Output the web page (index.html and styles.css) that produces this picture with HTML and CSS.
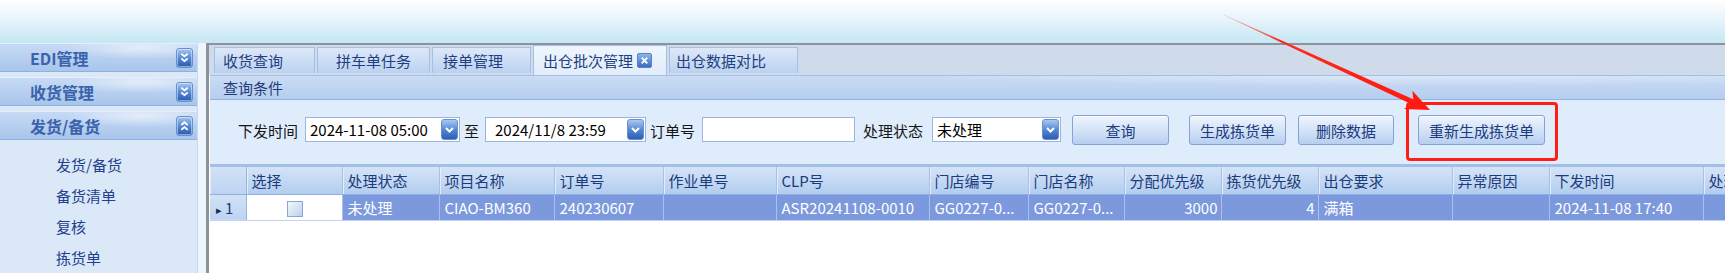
FILE: index.html
```html
<!DOCTYPE html>
<html lang="zh-CN">
<head>
  <meta charset="UTF-8" />
  <meta name="viewport" content="width=device-width, initial-scale=1.0"/>
  <title>出仓批次管理</title>
  <link rel="stylesheet" href="styles.css">
</head>
<body>

  <!-- Top banner -->
  <div class="banner"></div>

  <div class="main">

    <!-- Left menu -->
    <div class="sidebar">
      <div class="menu-head">
        <span>EDI管理</span>
        <span class="hicon"><svg viewBox="0 0 14 17"><path d="M4 4.5l3 2.5 3-2.5M4 9l3 2.5 3-2.5"/></svg></span>
      </div>
      <div class="menu-head">
        <span>收货管理</span>
        <span class="hicon"><svg viewBox="0 0 14 17"><path d="M4 4.5l3 2.5 3-2.5M4 9l3 2.5 3-2.5"/></svg></span>
      </div>
      <div class="menu-head">
        <span>发货/备货</span>
        <span class="hicon"><svg viewBox="0 0 14 17"><path d="M4 7.5l3-2.5 3 2.5M4 12l3-2.5 3 2.5"/></svg></span>
      </div>
      <ul class="menu-items">
        <li>发货/备货</li>
        <li>备货清单</li>
        <li>复核</li>
        <li>拣货单</li>
      </ul>
    </div>

    <div class="spacer"></div>

    <!-- Work area -->
    <div class="panel">
      <div class="tabs">
        <div class="tab t1">收货查询</div>
        <div class="tab t2">拼车单任务</div>
        <div class="tab t3">接单管理</div>
        <div class="tab t4 active">出仓批次管理
          <span class="tclose"><svg viewBox="0 0 14 14"><path d="M4 4l6 6M10 4l-6 6"/></svg></span>
        </div>
        <div class="tab t5">出仓数据对比</div>
      </div>

      <div class="querybar">查询条件</div>

      <div class="filters">
        <span class="lbl">下发时间</span>
        <div class="field date1">
          <span>2024-11-08 05:00</span>
          <span class="dd"><svg viewBox="0 0 15 19"><path d="M4 8l3.5 3.5L11 8"/></svg></span>
        </div>
        <span class="lbl to">至</span>
        <div class="field date2">
          <span>2024/11/8 23:59</span>
          <span class="dd"><svg viewBox="0 0 15 19"><path d="M4 8l3.5 3.5L11 8"/></svg></span>
        </div>
        <span class="lbl order">订单号</span>
        <div class="field orderno"></div>
        <span class="lbl status">处理状态</span>
        <div class="field select">
          <span>未处理</span>
          <span class="dd"><svg viewBox="0 0 15 19"><path d="M4 8l3.5 3.5L11 8"/></svg></span>
        </div>
        <button class="btn b-query">查询</button>
        <button class="btn b-gen">生成拣货单</button>
        <button class="btn b-del">删除数据</button>
        <span class="mark">
          <button class="btn b-regen">重新生成拣货单</button>
          <span class="redbox"></span>
        </span>
      </div>

      <div class="grid-wrap">
        <table class="grid">
          <colgroup>
            <col><col><col><col><col><col><col><col><col><col><col><col><col><col><col>
          </colgroup>
          <thead>
            <tr>
              <th class="rh"></th>
              <th>选择</th>
              <th>处理状态</th>
              <th>项目名称</th>
              <th>订单号</th>
              <th>作业单号</th>
              <th>CLP号</th>
              <th>门店编号</th>
              <th>门店名称</th>
              <th>分配优先级</th>
              <th>拣货优先级</th>
              <th>出仓要求</th>
              <th>异常原因</th>
              <th>下发时间</th>
              <th>处理人</th>
            </tr>
          </thead>
          <tbody>
            <tr class="sel">
              <td class="rh"><span class="tri">&#9656;</span>1</td>
              <td class="chk"><span class="box"></span></td>
              <td>未处理</td>
              <td>CIAO-BM360</td>
              <td>240230607</td>
              <td></td>
              <td>ASR20241108-0010</td>
              <td>GG0227-0...</td>
              <td>GG0227-0...</td>
              <td class="num">3000</td>
              <td class="num">4</td>
              <td>满箱</td>
              <td></td>
              <td>2024-11-08 17:40</td>
              <td></td>
            </tr>
          </tbody>
        </table>
      </div>
    </div>
  </div>

  <!-- annotation arrow -->
  <svg class="arrow" viewBox="0 0 1725 273">
    <defs>
      <linearGradient id="shaft" x1="1224" y1="15" x2="1414" y2="102" gradientUnits="userSpaceOnUse">
        <stop offset="0" stop-color="#ff6a5a" stop-opacity="0.35"/>
        <stop offset="0.3" stop-color="#ff2a1c"/>
        <stop offset="1" stop-color="#ff1a10"/>
      </linearGradient>
    </defs>
    <polygon points="1223.9,15.3 1224.1,14.7 1414.8,100.1 1412.6,104.7" fill="url(#shaft)"/>
    <polygon points="1430,110 1404,109 1413.7,102.4 1412.4,90.8" fill="#ff1a10"/>
  </svg>

</body>
</html>
```

FILE: styles.css
```css
* {
  box-sizing: border-box;
}

body {
  margin: 0;
  width: 1725px;
  height: 273px;
  overflow: hidden;
  position: relative;
  font-family: "Noto Sans CJK SC", "Microsoft YaHei", sans-serif;
  font-size: 15px;
  background: #fff;
}

.banner {
  height: 43px;
  background: linear-gradient(#fdfeff 0%, #eef6fc 35%, #c4e7f4 100%);
}

.main {
  display: flex;
  height: 230px;
}

/* ---------- sidebar ---------- */

.sidebar {
  width: 198px;
  background: #dbe8f8;
  border-right: 1px solid #c8daf0;
  display: flex;
  flex-direction: column;
  gap: 5px;
}

.menu-head {
  height: 29px;
  display: flex;
  align-items: center;
  justify-content: space-between;
  padding: 0 4px 0 30px;
  font-weight: bold;
  font-size: 16px;
  color: #3a63ab;
  border-top: 1px solid #e6effb;
  border-bottom: 1px solid #8fb1e0;
  background:
    radial-gradient(ellipse 110px 16px at 72% 15%, rgba(255,255,255,0.55), rgba(255,255,255,0) 70%),
    linear-gradient(#c6daf4, #a9c5ec);
}

.hicon {
  width: 17px;
  height: 20px;
  border-radius: 3px;
  border: 1px solid #6a90c9;
  background: linear-gradient(#a7c6f1, #4f84d3 55%, #2b5cb0);
  box-shadow: inset 0 0 0 1px rgba(255,255,255,0.45);
  display: flex;
}

.hicon svg {
  width: 15px;
  height: 18px;
  fill: none;
  stroke: #fff;
  stroke-width: 1.7;
}

.menu-items {
  list-style: none;
  margin: 0;
  padding: 4px 0 0 56px;
  color: #22408e;
  line-height: 31px;
}

.spacer {
  width: 8px;
  background: #eef5fc;
}

/* ---------- work panel ---------- */

.panel {
  flex: 1;
  min-width: 0;
  border-top: 2px solid #8f9399;
  border-left: 3px solid #8f9399;
  background: #fff;
  display: flex;
  flex-direction: column;
}

.tabs {
  height: 30px;
  background: #cfdbea;
  display: flex;
  align-items: flex-end;
  gap: 2px;
  padding: 0 0 0 5px;
}

.tab {
  height: 26px;
  margin-bottom: 2px;
  padding-left: 8px;
  display: flex;
  align-items: center;
  color: #1f3f80;
  white-space: nowrap;
  border: 1px solid #a5bfe5;
  border-bottom: none;
  background: linear-gradient(#dce8f8, #bcd2f1);
}

.t1 { width: 101px; }
.t2 { width: 113px; padding-left: 18px; }
.t3 { width: 99px; padding-left: 10px; }
.t4 { width: 134px; }
.t5 { width: 129px; padding-left: 6px; }

.tab.active {
  height: 30px;
  margin-bottom: 0;
  padding-left: 9px;
  background: linear-gradient(#eef5fd, #e1edfa);
}

.tclose {
  width: 15px;
  height: 15px;
  margin-left: 4px;
  border-radius: 2px;
  background: linear-gradient(#8cb3ec, #3a6dc0);
  border: 1px solid #5b82c2;
  display: flex;
}

.tclose svg {
  width: 13px;
  height: 13px;
  fill: none;
  stroke: #fff;
  stroke-width: 2;
}

.querybar {
  height: 25px;
  margin-left: 1px;
  padding-left: 13px;
  display: flex;
  align-items: center;
  color: #1f3b78;
  border-top: 1px solid #a4bfe6;
  border-bottom: 1px solid #94b4e2;
  background:
    radial-gradient(ellipse 700px 14px at 80% 0%, rgba(255,255,255,0.35), rgba(255,255,255,0) 70%),
    linear-gradient(#cadcf4, #b5cdef);
}

/* ---------- filter row ---------- */

.filters {
  height: 67px;
  margin-left: 1px;
  padding: 15px 0 0 28px;
  display: flex;
  align-items: flex-start;
  background: #dfecfb;
  border-bottom: 3px solid #a3bfe6;
}

.lbl {
  height: 30px;
  display: flex;
  align-items: center;
  color: #161616;
  white-space: nowrap;
}

.to { margin-left: 4px; }
.order { margin-left: 4px; }
.status { margin-left: 8px; }

.field {
  height: 25px;
  margin-top: 2px;
  background: #fff;
  border: 1px solid #9db5dc;
  display: flex;
  align-items: center;
  padding-left: 4px;
  color: #000;
  white-space: nowrap;
}

.field .dd {
  margin-left: auto;
  margin-right: 1px;
}

.date1 { width: 155px; margin-left: 7px; }
.date2 { width: 161px; margin-left: 6px; padding-left: 9px; }
.orderno { width: 153px; margin-left: 7px; }
.select { width: 129px; margin-left: 9px; }

.dd {
  width: 17px;
  height: 21px;
  border-radius: 3px;
  border: 1px solid #6a90c9;
  background: linear-gradient(#a9c8f2, #4f84d3 55%, #2d5fb3);
  display: flex;
}

.dd svg {
  width: 15px;
  height: 19px;
  fill: none;
  stroke: #fff;
  stroke-width: 2;
}

.btn {
  height: 30px;
  padding: 0;
  font: inherit;
  font-size: 15px;
  color: #1c3b7d;
  border: 1px solid #86a3d5;
  border-radius: 3px;
  background: linear-gradient(#eef4fd, #d7e5f8 45%, #b8cef0);
  box-shadow: inset 0 1px 0 #fff;
}

.b-query { width: 97px; margin-left: 11px; }
.b-gen { width: 97px; margin-left: 20px; }
.b-del { width: 96px; margin-left: 12px; }
.b-regen { width: 127px; }

.mark {
  position: relative;
  margin-left: 24px;
  display: flex;
}

.redbox {
  position: absolute;
  left: -12px;
  top: -13px;
  width: 152px;
  height: 59px;
  border: 3px solid #ff1e16;
  border-radius: 4px;
}

/* ---------- grid ---------- */

.grid-wrap {
  flex: 1;
  margin-left: 1px;
  overflow: hidden;
  background: #fff;
}

.grid {
  border-collapse: collapse;
  table-layout: fixed;
  width: 1553px;
}

.grid col:nth-child(1) { width: 36px; }
.grid col:nth-child(2) { width: 96px; }
.grid col:nth-child(3) { width: 97px; }
.grid col:nth-child(4) { width: 115px; }
.grid col:nth-child(5) { width: 109px; }
.grid col:nth-child(6) { width: 113px; }
.grid col:nth-child(7) { width: 153px; }
.grid col:nth-child(8) { width: 99px; }
.grid col:nth-child(9) { width: 96px; }
.grid col:nth-child(10) { width: 97px; }
.grid col:nth-child(11) { width: 97px; }
.grid col:nth-child(12) { width: 134px; }
.grid col:nth-child(13) { width: 97px; }
.grid col:nth-child(14) { width: 154px; }
.grid col:nth-child(15) { width: 60px; }

.grid th,
.grid td {
  padding: 0 4px 0 5px;
  text-align: left;
  font-weight: normal;
  white-space: nowrap;
  overflow: hidden;
}

.grid th {
  height: 27px;
  color: #1d3a7a;
  border-right: 1px solid #a6c0e6;
  border-bottom: 1px solid #8fb0e0;
  background: linear-gradient(#d4e4f8, #b2cdef);
  box-shadow: inset 1px 0 0 #e3edfa;
}

.grid td {
  height: 26px;
  color: #fff;
  background: #7c99dd;
  border-right: 1px solid #abc0ee;
  border-bottom: 1px solid #c2d2f3;
}

.grid .rh {
  background: linear-gradient(#d2e2f6, #bcd3f1);
  color: #1d3a7a;
  border-right: 1px solid #98b4e0;
}

.grid td.rh {
  padding-left: 6px;
}

.tri {
  font-size: 11px;
  margin-right: 3px;
  color: #1a2a50;
}

.grid td.chk {
  background: #fff;
  text-align: center;
}

.box {
  display: inline-block;
  width: 16px;
  height: 16px;
  vertical-align: middle;
  border: 1px solid #8aa6d2;
  background: linear-gradient(135deg, #f4f8fe, #bcd2ef);
}

.grid td.num {
  text-align: right;
  padding-right: 3px;
}

/* ---------- annotation ---------- */

.arrow {
  position: absolute;
  left: 0;
  top: 0;
  width: 1725px;
  height: 273px;
  pointer-events: none;
}
```
